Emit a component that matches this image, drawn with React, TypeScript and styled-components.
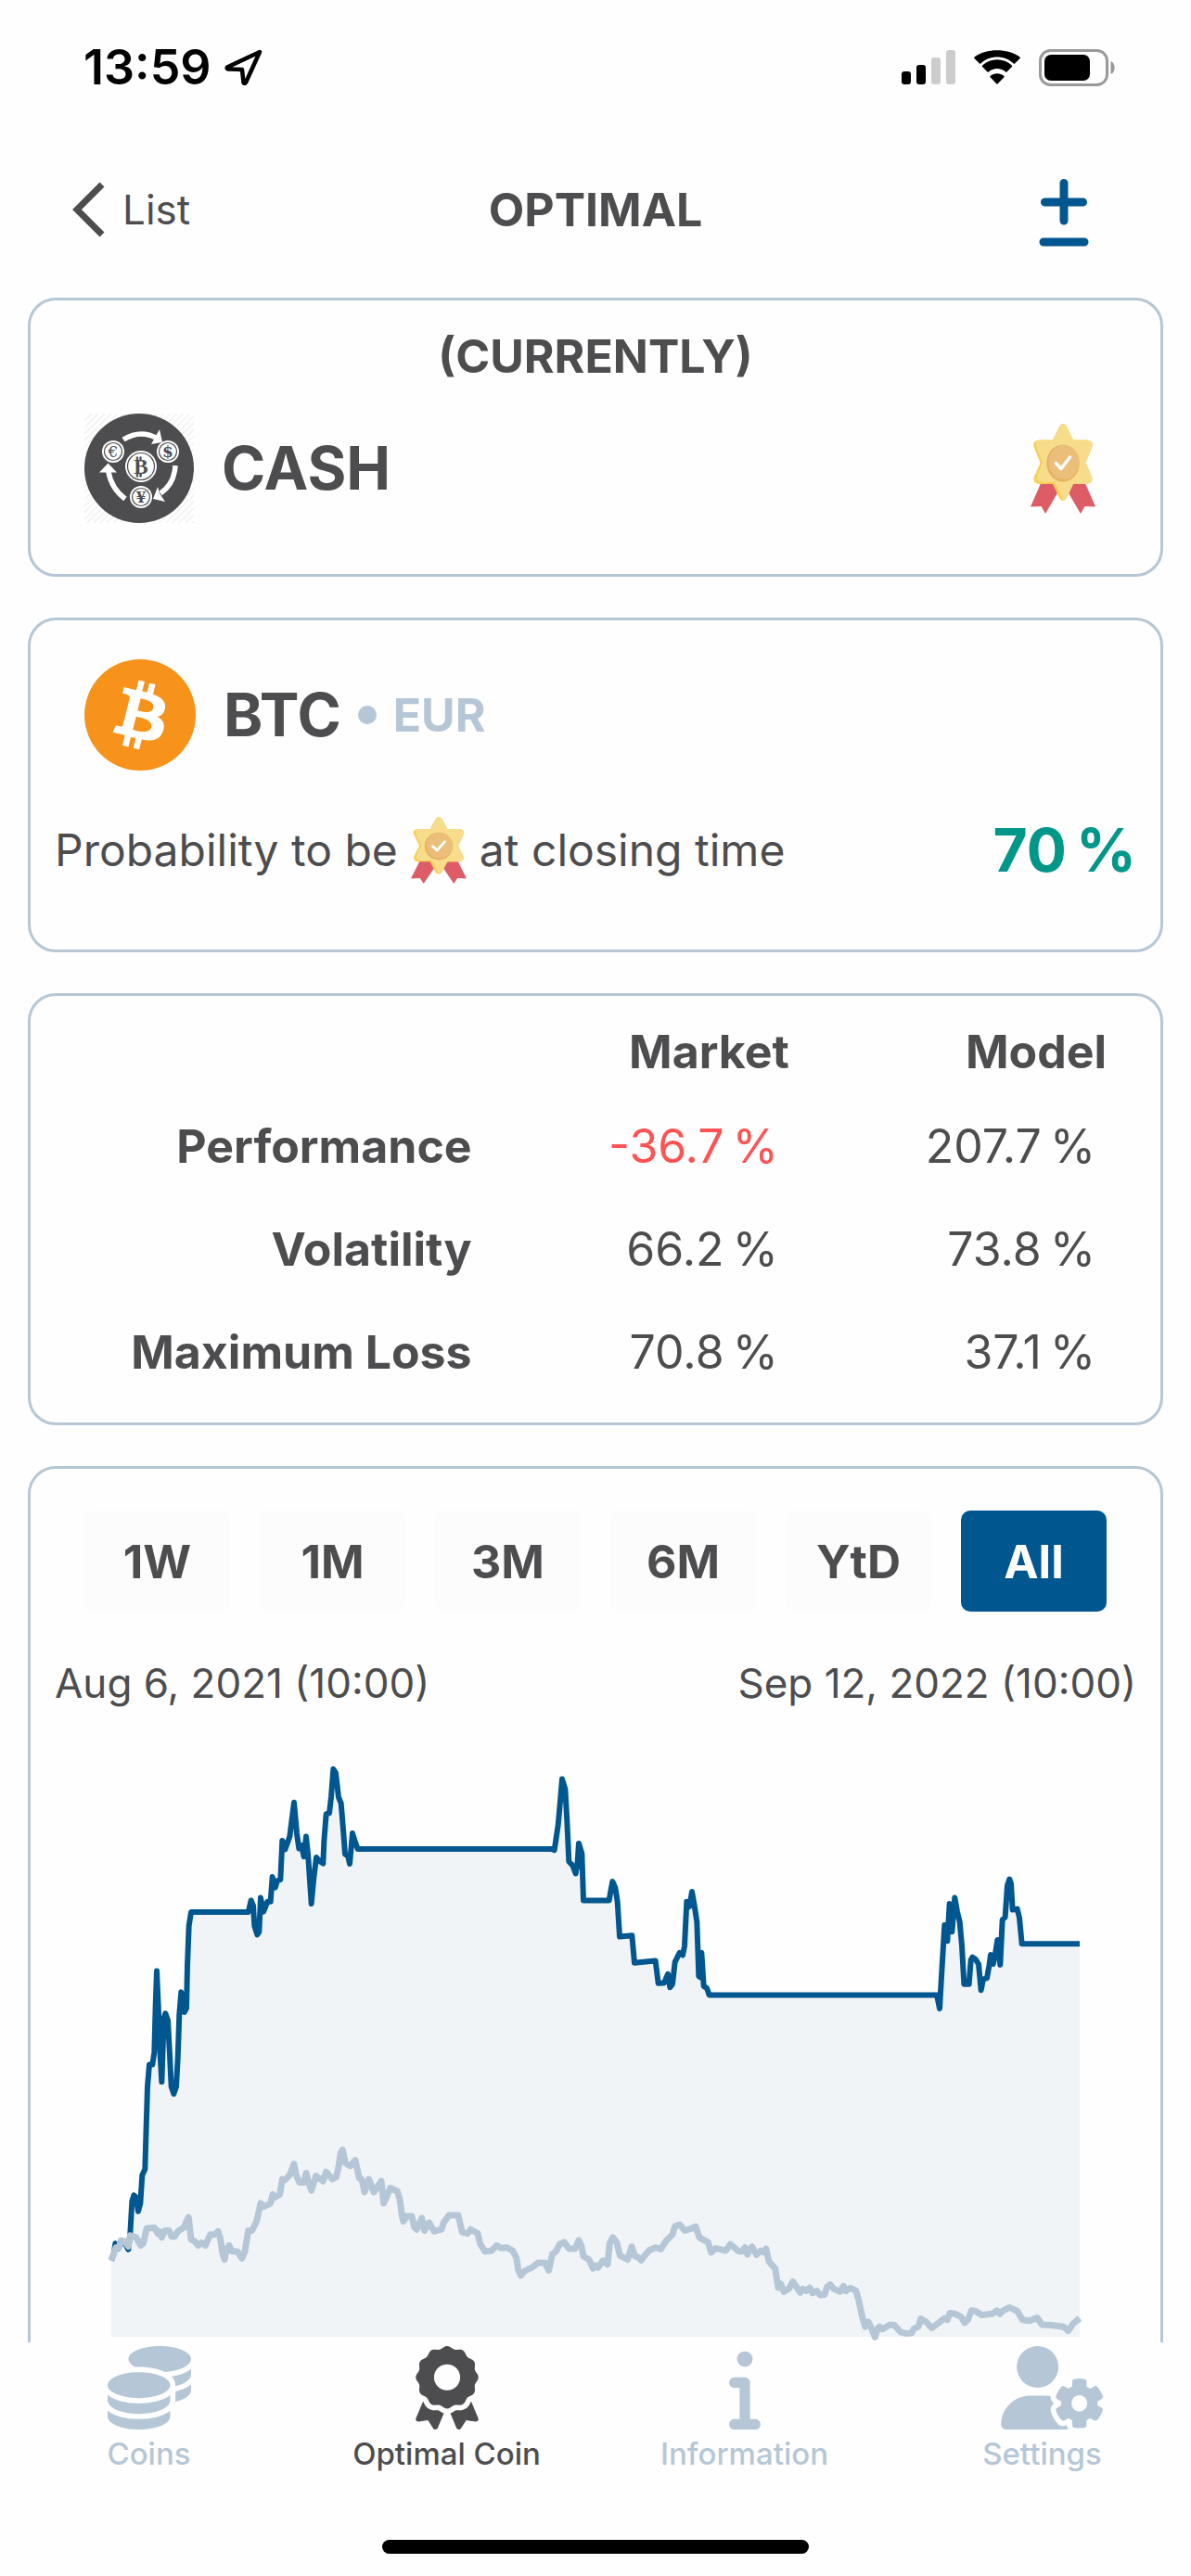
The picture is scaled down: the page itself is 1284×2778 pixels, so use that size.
import React, { useState } from "react";
import styled, { createGlobalStyle } from "styled-components";
import { FaAward, FaCoins, FaInfo, FaUserGear } from "react-icons/fa6";

const color = {
  text: "#4d4d4f",
  line: "#b5c7d6",
  primary: "#00568f",
  area: "#f0f4f7",
  good: "#009688",
  bad: "#ff5252",
};

const GlobalStyle = createGlobalStyle`
  *, *::before, *::after { box-sizing: border-box; }
  body {
    margin: 0;
    background: #fefefe;
    color: ${color.text};
    font-family: Inter, Roboto, "Liberation Sans", sans-serif;
  }
  button { font: inherit; color: inherit; border: 0; padding: 0; background: none; cursor: pointer; }
  svg { display: block; flex: none; }
`;

const Screen = styled.div`
  display: flex;
  flex-direction: column;
  height: 100vh;
`;

const StatusBar = styled.div`
  display: flex;
  flex: none;
  align-items: center;
  justify-content: space-between;
  height: 146px;
  padding: 0 82px 0 90px;
  color: #000;
`;

const StatusGroup = styled.div<{ $gap: number }>`
  display: flex;
  align-items: center;
  gap: ${(p) => p.$gap}px;
`;

const Clock = styled.time`
  font-size: 52px;
  font-weight: 600;
  line-height: 60px;
`;

const Header = styled.header`
  display: grid;
  flex: none;
  grid-template-columns: 1fr auto 1fr;
  align-items: center;
  height: 160px;
  padding: 0 78px;
`;

const BackButton = styled.button`
  display: flex;
  align-items: center;
  justify-self: start;
  gap: 18px;
  && { font-size: 44px; }
  line-height: 60px;
`;

const Title = styled.h1`
  margin: 0;
  font-size: 50px;
  font-weight: 700;
  line-height: 64px;
`;

const AdjustButton = styled.button`
  && { padding: 6px 32px 0 0; }
  justify-self: end;
`;

const Content = styled.main`
  display: flex;
  flex: 1;
  flex-direction: column;
  gap: 44px;
  min-height: 0;
  padding: 15px 30px 0;
  overflow-y: auto;
  scrollbar-width: none;
`;

const Card = styled.section<{ $pad: string }>`
  flex: none;
  padding: ${(p) => p.$pad};
  border: 3px solid ${color.line};
  border-radius: 30px;
`;

const CardTitle = styled.h2`
  margin: 0 0 30px;
  font-size: 50px;
  font-weight: 700;
  line-height: 64px;
  text-align: center;
`;

const AssetRow = styled.div`
  display: flex;
  align-items: center;
  gap: 30px;
  padding: 0 70px 0 58px;
`;

const AssetName = styled.div`
  display: flex;
  flex: 1;
  align-items: center;
  gap: 18px;
  font-size: 64px;
  font-weight: 700;
  line-height: 80px;
`;

const Dot = styled.span`
  width: 20px;
  height: 20px;
  border-radius: 50%;
  background: ${color.line};
`;

const Quote = styled.span`
  color: ${color.line};
  font-size: 50px;
  font-weight: 700;
`;

const ProbabilityRow = styled.div`
  display: flex;
  align-items: center;
  justify-content: space-between;
  margin-top: 50px;
  padding: 0 26px;
`;

const Sentence = styled.p`
  display: flex;
  align-items: center;
  gap: 14px;
  margin: 0;
  font-size: 48px;
  line-height: 72px;
`;

const Probability = styled.strong`
  color: ${color.good};
  font-size: 64px;
  font-weight: 700;
  line-height: 72px;
`;

const Stats = styled.table`
  width: calc(100% - 58px);
  border-collapse: collapse;
  table-layout: fixed;
  font-size: 50px;
  line-height: 64px;
  text-align: right;

  th, td { padding: 0; }
  th { font-weight: 700; }
  thead tr { height: 93px; }
  tbody tr { height: 111px; }
`;

const LabelColumn = styled.col`
  width: 41%;
`;

const Value = styled.td<{ $negative?: boolean }>`
  && { padding-right: 12px; }
  color: ${(p) => (p.$negative ? color.bad : color.text)};
`;

const Ranges = styled.div`
  display: flex;
  gap: 32px;
  padding: 0 58px;
`;

const RangeButton = styled.button<{ $active: boolean }>`
  && {
    flex: 1 1 0;
    height: 109px;
    border-radius: 10px;
    background: ${(p) => (p.$active ? color.primary : "#fcfcfc")};
    color: ${(p) => (p.$active ? "#fff" : color.text)};
    font-size: 50px;
    font-weight: 700;
  }
`;

const Dates = styled.div`
  display: flex;
  justify-content: space-between;
  margin: 47px 26px 15px;
  font-size: 44px;
  line-height: 60px;
`;

const ChartBox = styled.div`
  padding: 0 87px;

  svg { width: 100%; height: 660px; overflow: visible; }
  polyline { fill: none; stroke-linejoin: round; vector-effect: non-scaling-stroke; }
`;

const TabBar = styled.nav`
  display: grid;
  flex: none;
  grid-template-columns: repeat(4, 1fr);
  padding-top: 4px;
`;

const Tab = styled.button<{ $active: boolean }>`
  && {
    color: ${(p) => (p.$active ? color.text : color.line)};
    font-size: 33px;
    font-weight: 500;
  }
  display: flex;
  flex-direction: column;
  align-items: center;
  gap: 6px;
  line-height: 40px;
`;

const TabIcon = styled.span<{ $width: number }>`
  display: flex;
  justify-content: safe center;
  width: 90px;

  svg { width: ${(p) => p.$width}px; height: 90px; }
`;

const HomeIndicator = styled.div`
  flex: none;
  width: 460px;
  height: 15px;
  margin: 73px auto 24px;
  border-radius: 8px;
  background: #000;
`;

const MODEL =
  "60,1332 68,1315 73,1290 83,1302 95,1285 105,1290 115,1305 121,1265 127,1185 133,1170 140,1175 147,1210 154,1190 160,1120 169,1105 173,1000 177,900 183,845 193,845 199,815 203,700 207,612 212,700 218,820 223,888 227,800 230,730 235,718 243,735 249,820 254,900 262,918 270,900 275,830 280,720 286,665 290,690 296,715 303,705 306,600 311,500 318,466 503,466 512,437 519,450 523,500 532,522 538,515 543,430 552,465 565,440 575,440 581,378 590,405 597,388 607,385 613,288 622,310 637,278 651,193 660,270 667,308 675,300 683,328 690,278 697,330 707,445 715,380 723,330 735,340 745,345 748,290 755,222 765,220 771,180 778,110 786,120 795,180 803,195 810,260 816,322 825,325 831,346 840,270 848,290 857,309 1485,309 1493,312 1505,250 1512,190 1518,135 1528,160 1534,240 1540,340 1552,350 1562,370 1567,350 1572,295 1582,320 1587,437 1670,437 1676,410 1681,390 1690,405 1697,440 1704,527 1744,524 1752,592 1820,587 1829,643 1848,642 1860,620 1867,653 1875,645 1883,590 1898,567 1908,573 1914,550 1921,440 1930,452 1938,415 1945,445 1954,490 1960,625 1965,628 1969,567 1976,650 1986,655 1994,672 2730,672 2739,706 2747,600 2755,498 2764,538 2771,445 2779,515 2788,430 2796,465 2804,490 2811,550 2818,645 2834,645 2840,585 2845,578 2855,583 2865,595 2873,660 2880,633 2892,630 2899,600 2904,572 2912,595 2918,575 2926,535 2935,597 2942,485 2951,478 2958,400 2965,384 2970,395 2975,460 2990,458 2997,480 3005,545 3192,545";

const MARKET =
  "60,1332 75,1300 85,1300 91,1283 103,1285 115,1297 121,1270 140,1275 155,1295 163,1290 175,1252 200,1251 210,1265 215,1260 223,1275 233,1258 247,1258 255,1273 265,1273 275,1260 295,1250 303,1235 310,1225 318,1280 330,1285 341,1295 352,1288 364,1295 380,1268 395,1268 405,1260 412,1275 420,1315 426,1330 433,1305 441,1295 450,1310 468,1310 482,1327 492,1310 503,1258 515,1258 530,1235 543,1190 555,1198 575,1190 582,1168 590,1175 605,1168 613,1130 622,1132 637,1120 651,1092 658,1120 668,1138 683,1138 690,1115 697,1135 707,1158 722,1122 745,1135 755,1112 775,1130 787,1125 795,1100 802,1065 808,1057 817,1090 833,1097 849,1083 862,1128 870,1130 879,1162 893,1130 909,1162 920,1150 933,1135 941,1190 950,1175 962,1152 985,1160 993,1180 1000,1220 1005,1235 1015,1222 1032,1222 1040,1250 1048,1255 1064,1227 1073,1258 1088,1238 1104,1260 1128,1255 1135,1238 1152,1220 1182,1220 1195,1262 1213,1265 1222,1255 1245,1265 1253,1290 1268,1310 1290,1308 1307,1295 1320,1301 1340,1300 1358,1308 1370,1325 1376,1355 1385,1370 1398,1358 1420,1350 1440,1338 1463,1338 1475,1357 1486,1317 1498,1310 1510,1292 1525,1287 1540,1303 1560,1303 1572,1282 1580,1295 1587,1322 1605,1330 1618,1352 1626,1345 1634,1350 1650,1333 1665,1342 1672,1290 1682,1275 1695,1288 1705,1320 1730,1330 1743,1298 1754,1322 1766,1325 1774,1332 1785,1320 1800,1307 1820,1300 1837,1304 1855,1283 1875,1268 1883,1247 1898,1243 1915,1258 1935,1253 1950,1248 1962,1275 1990,1287 2000,1312 2015,1302 2047,1308 2062,1292 2090,1310 2100,1310 2109,1300 2117,1317 2132,1298 2147,1318 2160,1308 2170,1312 2178,1303 2187,1335 2207,1352 2217,1400 2225,1390 2235,1410 2252,1402 2264,1385 2278,1400 2288,1412 2296,1403 2308,1408 2319,1400 2328,1413 2342,1408 2352,1418 2367,1417 2375,1398 2385,1392 2397,1403 2417,1410 2428,1396 2436,1408 2450,1401 2468,1407 2477,1430 2488,1470 2498,1497 2508,1485 2518,1500 2530,1523 2538,1502 2545,1497 2554,1503 2578,1492 2593,1493 2612,1510 2632,1514 2648,1513 2656,1502 2670,1497 2678,1477 2695,1485 2714,1500 2735,1488 2755,1476 2764,1480 2772,1463 2790,1465 2808,1472 2820,1487 2830,1480 2842,1457 2855,1458 2875,1468 2910,1465 2924,1457 2934,1465 2944,1457 2965,1449 2990,1458 3007,1480 3030,1482 3055,1475 3070,1492 3100,1493 3140,1497 3155,1507 3170,1490 3192,1476";

function PerformanceChart() {
  return (
    <ChartBox>
      <svg viewBox="60 0 3132 1522" preserveAspectRatio="none" role="img" aria-label="Model and market performance">
        <polygon points={`60,1522 ${MODEL} 3192,1522`} fill={color.area} />
        <polyline points={MODEL} stroke={color.primary} strokeWidth="6" />
        <polyline points={MARKET} stroke={color.line} strokeWidth="7" />
      </svg>
    </ChartBox>
  );
}

function LocationArrow() {
  return (
    <svg width="42" height="40" viewBox="0 0 42 40" fill="none" stroke="#000" strokeWidth="4.5" strokeLinejoin="round">
      <path d="M38 3 L3 19.5 Q2 21 4 21.500 L19 22 L20.500 36 Q21.500 38 23 36 Z" />
    </svg>
  );
}

function Signal() {
  return (
    <svg width="58" height="38" viewBox="0 0 58 38">
      <rect x="0" y="23" width="10" height="14" rx="3" />
      <rect x="16" y="16" width="10" height="21" rx="3" />
      <rect x="32" y="8" width="10" height="29" rx="3" fill="#ccc" />
      <rect x="48" y="0" width="10" height="37" rx="3" fill="#ccc" />
    </svg>
  );
}

function Wifi() {
  return (
    <svg width="52" height="38" viewBox="0 0 52 38">
      <path d="M26 7.500c6.800 0 13 2.600 17.700 7.100.4.400 1 .400 1.300 0l5.500-5.500c.5-.5.500-1.200 0-1.700C37.200-2 14.800-2 1.500 7.400c-.5.500-.5 1.200 0 1.700L7 14.600c.3.400.9.400 1.300 0C13 10.100 19.200 7.500 26 7.500z" />
      <path d="M26 20c3.500 0 6.700 1.300 9.200 3.500.4.300 1 .3 1.300 0l5.400-5.500c.4-.5.400-1.200 0-1.600-8.900-8.300-22.900-8.300-31.800 0-.4.400-.4 1.100 0 1.600l5.400 5.500c.3.300.9.300 1.300 0C19.300 21.300 22.500 20 26 20z" />
      <path d="M33.400 29.300c.4-.4.400-1 0-1.400-4.200-3.600-10.600-3.600-14.800 0-.4.400-.4 1 0 1.400l6.600 6.900c.4.500 1.200.500 1.600 0z" />
    </svg>
  );
}

function Battery() {
  return (
    <svg width="82" height="40" viewBox="0 0 82 40">
      <rect x="1.500" y="1.500" width="72" height="37" rx="11" fill="none" stroke="#999" strokeWidth="3" />
      <rect x="6" y="6" width="49" height="28" rx="7" />
      <path d="M77.500 13c5.500 2 5.500 12 0 14z" fill="#999" />
    </svg>
  );
}

function Medal({ width, height }: { width: number; height: number }) {
  const star =
    "M31 3Q35-3 39 3L46 17.500H61Q69 19 66 26L59.500 42 66 57Q68 64 61 65H46L39 80Q35 86 31 80L24 65H9Q2 64 4 57L10.500 42 4 26Q1 19 9 17.500H24Z";
  return (
    <svg width={width} height={height} viewBox="0 0 70 97" preserveAspectRatio="none">
      <path d="M12 62L0 89.500 11.500 89 16 97 30 73 24 62ZM58 62L70 89.500 58.500 89 54 97 40 73 46 62Z" fill="#dd5c66" />
      <path d={star} fill="#f8cf52" />
      <path d="M31 3Q35-3 39 3L46 17.500H61Q69 19 66 26L59.500 42 66 57Q68 64 61 65H46L39 80Q36 85 34 80L26 63H12Q5 62 7 56L13 42 7 27Q4 19 10 17.500H24Z" fill="#f7dd8b" />
      <ellipse cx="35" cy="42.500" rx="17.700" ry="20" fill="#e5b263" />
      <ellipse cx="36" cy="41.500" rx="16.500" ry="18.500" fill="#ebbf79" />
      <path d="M27.500 42.500L33 48.500 42.500 36" fill="none" stroke="#fff" strokeWidth="3.500" strokeLinecap="round" strokeLinejoin="round" />
    </svg>
  );
}

function CashLogo() {
  const coins = [
    { x: 61, y: 57, r: 17, size: 23, weight: 700, sign: "₿" },
    { x: 31, y: 41, r: 12, size: 17, weight: 400, sign: "€" },
    { x: 90, y: 41, r: 12, size: 17, weight: 700, sign: "$" },
    { x: 61, y: 90, r: 12, size: 16, weight: 700, sign: "¥" },
  ];
  return (
    <svg width="118" height="118" viewBox="0 0 118 118">
      <defs>
        <pattern id="hatch" width="5" height="5" patternUnits="userSpaceOnUse" patternTransform="rotate(45)">
          <rect width="1" height="5" fill="#ededed" />
        </pattern>
      </defs>
      <rect width="118" height="118" fill="url(#hatch)" />
      <circle cx="59" cy="59" r="59" fill={color.text} />
      <g fill="none" stroke="#fff" strokeWidth="5.500">
        <path d="M42 28Q60 17 77 26" />
        <path d="M98 56Q97 76 82 86" />
        <path d="M44 92Q28 80 25.500 60" />
      </g>
      <path d="M81 17L84 31 72 33 76 26ZM74 92L79 79 81 86 87 95ZM25.500 53.500L16 63.500H35Z" fill="#fff" />
      {coins.map((c) => (
        <g key={c.sign}>
          <circle cx={c.x} cy={c.y} r={c.r} fill="#fff" />
          <circle cx={c.x} cy={c.y} r={c.r - 2.5} fill="none" stroke={color.text} strokeWidth="1.2" />
          <text
            x={c.x}
            y={c.y + c.size * 0.36}
            textAnchor="middle"
            fontFamily="'DejaVu Serif', serif"
            fontWeight={c.weight}
            fontSize={c.size}
            fill={color.text}
          >
            {c.sign}
          </text>
        </g>
      ))}
    </svg>
  );
}

function BitcoinLogo() {
  return (
    <svg width="120" height="120" viewBox="0 0 32 32">
      <circle cx="16" cy="16" r="16" fill="#f7931a" />
      <path
        fill="#fff"
        d="M23.189 14.02c.314-2.096-1.283-3.223-3.465-3.975l.708-2.84-1.728-.43-.69 2.765c-.454-.114-.92-.22-1.385-.326l.695-2.783L15.596 6l-.708 2.839c-.376-.086-.746-.17-1.104-.26l.002-.009-2.384-.595-.46 1.846s1.283.294 1.256.312c.7.175.826.638.805 1.006l-.806 3.235c.048.012.11.03.18.057l-.183-.045-1.13 4.532c-.086.212-.303.531-.793.41.018.025-1.256-.313-1.256-.313l-.858 1.978 2.25.561c.418.105.828.215 1.231.318l-.715 2.872 1.727.43.708-2.84c.472.127.93.245 1.378.357l-.706 2.828 1.728.43.715-2.866c2.948.558 5.164.333 6.097-2.333.752-2.146-.037-3.385-1.588-4.192 1.13-.26 1.98-1.003 2.207-2.538zm-3.95 5.538c-.533 2.147-4.148.986-5.32.695l.95-3.805c1.172.293 4.929.872 4.37 3.11zm.535-5.569c-.487 1.953-3.495.96-4.47.717l.86-3.45c.975.243 4.118.696 3.61 2.733z"
      />
    </svg>
  );
}

const stats = [
  { label: "Performance", market: "-36.7", model: "207.7" },
  { label: "Volatility", market: "66.2", model: "73.8" },
  { label: "Maximum Loss", market: "70.8", model: "37.1" },
];

const ranges = ["1W", "1M", "3M", "6M", "YtD", "All"];

const tabs = [
  { label: "Coins", Icon: FaCoins, width: 90 },
  { label: "Optimal Coin", Icon: FaAward, width: 90 },
  { label: "Information", Icon: FaInfo, width: 90 },
  { label: "Settings", Icon: FaUserGear, width: 113 },
];

export default function App() {
  const [range, setRange] = useState("All");
  const [tab, setTab] = useState("Optimal Coin");

  return (
    <Screen>
      <GlobalStyle />
      <StatusBar>
        <StatusGroup $gap={14}>
          <Clock>13:59</Clock>
          <LocationArrow />
        </StatusGroup>
        <StatusGroup $gap={19}>
          <Signal />
          <Wifi />
          <Battery />
        </StatusGroup>
      </StatusBar>

      <Header>
        <BackButton type="button">
          <svg width="36" height="60" viewBox="0 0 36 60" fill="none" stroke={color.text} strokeWidth="7">
            <path d="M32 3L5 30 32 57" />
          </svg>
          List
        </BackButton>
        <Title>OPTIMAL</Title>
        <AdjustButton type="button" aria-label="Adjust">
          <svg width="54" height="74" viewBox="0 0 54 74" stroke={color.primary} strokeWidth="9" strokeLinecap="round">
            <path d="M27 5.500V46M6.500 26H47.500M5 69H49" />
          </svg>
        </AdjustButton>
      </Header>

      <Content>
        <Card $pad="28px 0 55px">
          <CardTitle>(CURRENTLY)</CardTitle>
          <AssetRow>
            <CashLogo />
            <AssetName>CASH</AssetName>
            <Medal width={70} height={97} />
          </AssetRow>
        </Card>

        <Card $pad="42px 0 71px">
          <AssetRow>
            <BitcoinLogo />
            <AssetName>
              BTC <Dot /> <Quote>EUR</Quote>
            </AssetName>
          </AssetRow>
          <ProbabilityRow>
            <Sentence>
              <span>Probability to be</span>
              <Medal width={60} height={72} />
              <span>at closing time</span>
            </Sentence>
            <Probability>70{"\u2009"}%</Probability>
          </ProbabilityRow>
        </Card>

        <Card $pad="13px 0 21px">
          <Stats>
            <colgroup>
              <LabelColumn />
              <col />
              <col />
            </colgroup>
            <thead>
              <tr>
                <td />
                <th scope="col">Market</th>
                <th scope="col">Model</th>
              </tr>
            </thead>
            <tbody>
              {stats.map((s) => (
                <tr key={s.label}>
                  <th scope="row">{s.label}</th>
                  <Value $negative={s.market.startsWith("-")}>{s.market}{"\u2009"}%</Value>
                  <Value>{s.model}{"\u2009"}%</Value>
                </tr>
              ))}
            </tbody>
          </Stats>
        </Card>

        <Card $pad="45px 0 60px">
          <Ranges>
            {ranges.map((r) => (
              <RangeButton key={r} type="button" $active={r === range} aria-pressed={r === range} onClick={() => setRange(r)}>
                {r}
              </RangeButton>
            ))}
          </Ranges>
          <Dates>
            <span>Aug 6, 2021 (10:00)</span>
            <span>Sep 12, 2022 (10:00)</span>
          </Dates>
          <PerformanceChart />
        </Card>
      </Content>

      <TabBar>
        {tabs.map(({ label, Icon, width }) => (
          <Tab key={label} type="button" $active={label === tab} onClick={() => setTab(label)}>
            <TabIcon $width={width}>
              <Icon />
            </TabIcon>
            {label}
          </Tab>
        ))}
      </TabBar>
      <HomeIndicator />
    </Screen>
  );
}
